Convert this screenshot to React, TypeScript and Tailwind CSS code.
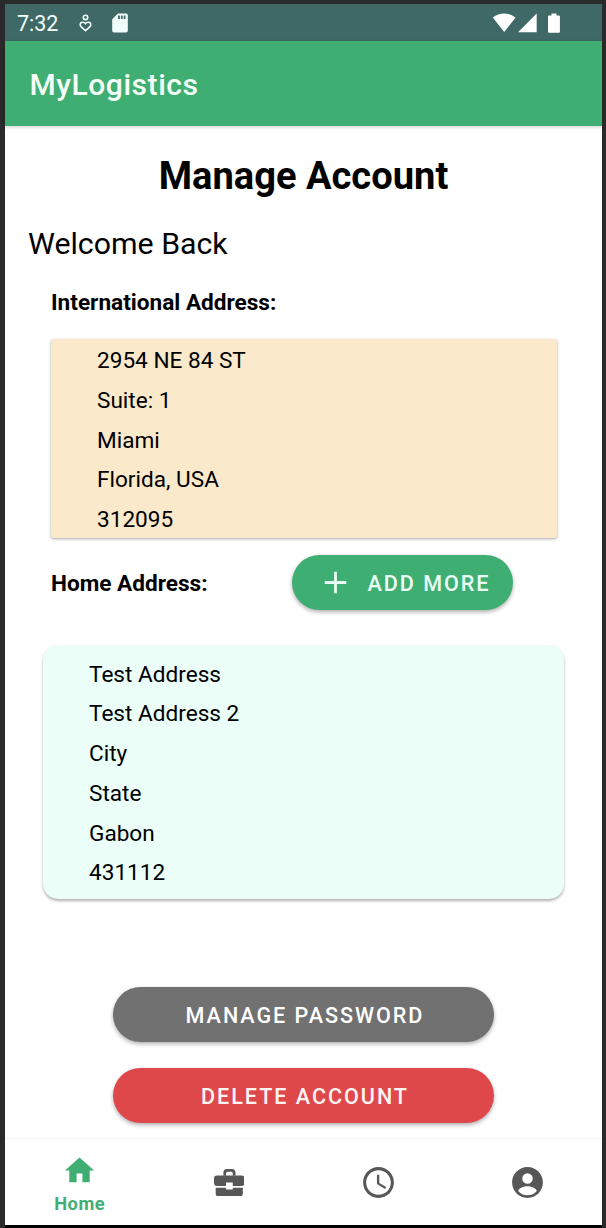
import type { ReactNode } from "react";

function Icon({ d, className }: { d: string; className: string }) {
  return (
    <svg viewBox="0 0 24 24" fill="currentColor" className={className}>
      <path fillRule="evenodd" d={d} />
    </svg>
  );
}

const HOME = "M10 20v-6h4v6h5v-8h3L12 3 2 12h3v8z";
const ACCOUNT =
  "M12 2C6.48 2 2 6.48 2 12s4.48 10 10 10 10-4.48 10-10S17.52 2 12 2zm0 4a3.4 3.4 0 0 1 0 6.8a3.4 3.4 0 0 1 0-6.8zm0 14.2c-2.5 0-4.71-.9-6-2.72.03-1.99 4-3.08 6-3.08 1.99 0 5.97 1.09 6 3.08-1.29 1.82-3.5 2.72-6 2.72z";
const CLOCK =
  "M11.99 2C6.47 2 2 6.48 2 12s4.47 10 9.99 10C17.52 22 22 17.52 22 12S17.52 2 11.99 2zM12 20c-4.42 0-8-3.58-8-8s3.58-8 8-8 8 3.58 8 8-3.58 8-8 8zm.5-13H11v6l5.25 3.15.75-1.23-4.5-2.67z";
const PLUS = "M19 12.9h-6.1v6.1h-1.8v-6.1H5v-1.8h6.1V5h1.8v6.1H19v1.8z";

function Briefcase() {
  return (
    <svg viewBox="0 0 91 82" className="mt-[1px] h-[27.5px] w-[30.5px]" fill="currentColor">
      <path d="M28 20V11Q28 0 39 0H53Q64 0 64 11V20H56V13Q56 8 51 8H41Q36 8 36 13V20z" />
      <path d="M9 19H82Q91 19 91 28V42Q91 51 82 51H56V40H36V51H9Q0 51 0 42V28Q0 19 9 19z" />
      <path d="M5 56H36V61H56V56H86V73Q86 82 77 82H14Q5 82 5 73z" />
    </svg>
  );
}

function StatusBar() {
  return (
    <div className="flex h-[37px] shrink-0 items-center bg-[#3f6966] pl-[12px] pr-[42px] text-[#f3fffd]">
      <span className="w-[62px] pt-[2px] text-[21.5px] leading-[37px]">7:32</span>
      <svg viewBox="0 0 13 18" className="h-[18px] w-[13px]" fill="none" stroke="currentColor" strokeWidth="1.6">
        <circle cx="6.5" cy="3.4" r="2.2" />
        <path d="M6.5 9.6C5.2 7.6 1.2 7.7 1.2 10.8c0 2 2.8 3.6 5.3 5.8 2.5-2.2 5.3-3.8 5.3-5.8 0-3.1-4-3.2-5.3-1.2z" />
      </svg>
      <svg viewBox="0 0 16 20" className="ml-[20px] h-[20px] w-[16px]" fill="currentColor">
        <path
          fillRule="evenodd"
          d="M6 .5h8a1.8 1.8 0 0 1 1.8 1.8v15.4a1.8 1.8 0 0 1-1.8 1.8H2a1.8 1.8 0 0 1-1.8-1.8V6.3zM6.1 2.5v3.4h1.8V2.5zm2.8 0v3.4h1.8V2.5zm2.8 0v3.4h1.8V2.5z"
        />
      </svg>
      <svg viewBox="0 0 68 20" className="ml-auto h-[20px] w-[68px]" fill="#fff">
        <path d="M.8 4.6C7.5-.8 16.9-.8 23.6 4.6L12.2 19z" />
        <path d="M44.7.5V19.2H26z" />
        <path d="M59.5.5h5v2h2.4a1 1 0 0 1 1 1v15.2a1 1 0 0 1-1 1H57a1 1 0 0 1-1-1V3.5a1 1 0 0 1 1-1h2.5z" />
      </svg>
    </div>
  );
}

function Lines({ items }: { items: string[] }) {
  return (
    <>
      {items.map((item) => (
        <p key={item} className="h-[39.8px] text-[22.6px] leading-[40px]">
          {item}
        </p>
      ))}
    </>
  );
}

function PillButton({ className, children }: { className: string; children: ReactNode }) {
  return (
    <button
      className={`flex h-[55px] items-center justify-center rounded-full pl-[3px] pt-[3px] text-[21.6px] font-medium tracking-[1.95px] shadow-[0_2px_4px_rgba(0,0,0,0.32)] ${className}`}
    >
      {children}
    </button>
  );
}

export default function App() {
  return (
    <div className="flex h-[1228px] w-[606px] flex-col bg-[#2a2a2a] pl-[5px] pr-[4px] pt-[4px] font-['Roboto',sans-serif] text-black">
      <StatusBar />
      <header className="relative flex h-[85px] shrink-0 items-center bg-[#3fae73] pl-[24.5px] pt-[2px] text-[30px] font-medium tracking-[0.55px] text-[#f3fff8] shadow-[0_1px_4px_rgba(0,0,0,0.2)]">
        MyLogistics
      </header>
      <main className="flex flex-1 flex-col bg-white">
        <h1 className="mt-[26px] h-[48px] text-center text-[38.1px] font-bold leading-[48px]">Manage Account</h1>
        <p className="ml-[23px] mt-[24px] h-[40px] text-[30.3px] leading-[40px]">Welcome Back</p>
        <h2 className="ml-[46px] mt-[23px] h-[32px] text-[22.6px] font-bold leading-[32px]">International Address:</h2>
        <section className="ml-[46px] mt-[20px] h-[199px] w-[506px] rounded-[3px] bg-[#fae9cb] pl-[46px] pt-[2px] shadow-[0_1px_3px_rgba(0,0,0,0.35)]">
          <Lines items={["2954 NE 84 ST", "Suite: 1", "Miami", "Florida, USA", "312095"]} />
        </section>
        <div className="ml-[46px] mt-[17px] flex h-[55px] items-center">
          <h2 className="w-[241px] pt-[2px] text-[22.6px] font-bold">Home Address:</h2>
          <PillButton className="w-[221px] bg-[#3fae73] text-[#e9fff5]">
            <Icon d={PLUS} className="mb-[3px] mr-[13px] h-[37px] w-[37px]" />
            ADD MORE
          </PillButton>
        </div>
        <section className="ml-[38px] mt-[35px] h-[254px] w-[521px] rounded-[15px] bg-[#ebfef8] pl-[46px] pt-[9.5px] shadow-[0_2px_3px_rgba(0,0,0,0.3)]">
          <Lines items={["Test Address", "Test Address 2", "City", "State", "Gabon", "431112"]} />
        </section>
        <div className="ml-[108px] mt-[88px] flex w-[381px] flex-col gap-[26px]">
          <PillButton className="bg-[#717171] text-white">MANAGE PASSWORD</PillButton>
          <PillButton className="bg-[#df484b] text-[#fff3f3]">DELETE ACCOUNT</PillButton>
        </div>
      </main>
      <nav className="grid h-[87px] shrink-0 grid-cols-4 border-t border-[#f5f5f5] bg-white text-[#575757]">
        <div className="flex flex-col items-center pt-[14px] text-[#3fae73]">
          <Icon d={HOME} className="h-[35px] w-[35px]" />
          <span className="text-[18.3px] font-bold leading-[31px] tracking-[0.5px]">Home</span>
        </div>
        <div className="flex items-center justify-center">
          <Briefcase />
        </div>
        <div className="flex items-center justify-center">
          <Icon d={CLOCK} className="h-[37px] w-[37px]" />
        </div>
        <div className="flex items-center justify-center">
          <Icon d={ACCOUNT} className="h-[37px] w-[37px]" />
        </div>
      </nav>
      <div className="h-[3px] shrink-0 bg-black" />
    </div>
  );
}
